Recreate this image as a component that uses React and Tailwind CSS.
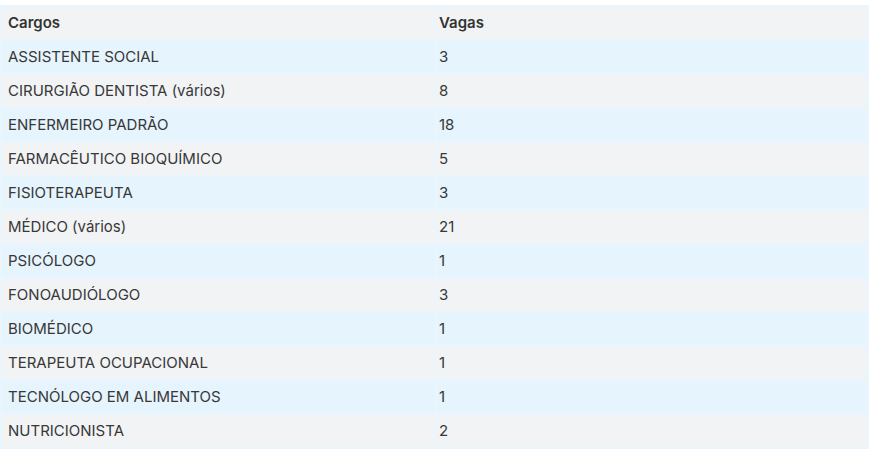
const ROWS = [
  ['ASSISTENTE SOCIAL', '3'],
  ['CIRURGIÃO DENTISTA (vários)', '8'],
  ['ENFERMEIRO PADRÃO', '18'],
  ['FARMACÊUTICO BIOQUÍMICO', '5'],
  ['FISIOTERAPEUTA', '3'],
  ['MÉDICO (vários)', '21'],
  ['PSICÓLOGO', '1'],
  ['FONOAUDIÓLOGO', '3'],
  ['BIOMÉDICO', '1'],
  ['TERAPEUTA OCUPACIONAL', '1'],
  ['TECNÓLOGO EM ALIMENTOS', '1'],
  ['NUTRICIONISTA', '2'],
]

export default function App() {
  return (
    <div className="bg-white pt-[5px] font-['Inter',sans-serif] text-[15px] text-[#383838]">
      <table className="w-full border-separate border-spacing-[2px] bg-[#eaf6fe]">
        <thead>
          <tr className="bg-[#f2f3f5]">
            <th className="h-[32px] w-[433px] px-[6px] text-left font-semibold text-[#333]">Cargos</th>
            <th className="h-[32px] px-[2px] text-left font-semibold text-[#333]">Vagas</th>
          </tr>
        </thead>
        <tbody>
          {ROWS.map(([cargo, vagas], i) => (
            <tr key={cargo} className={i % 2 === 0 ? 'bg-[#e5f4fd]' : 'bg-[#f2f3f5]'}>
              <td className="h-[32px] px-[6px]">{cargo}</td>
              <td className="h-[32px] px-[2px]">{vagas}</td>
            </tr>
          ))}
        </tbody>
      </table>
    </div>
  )
}
